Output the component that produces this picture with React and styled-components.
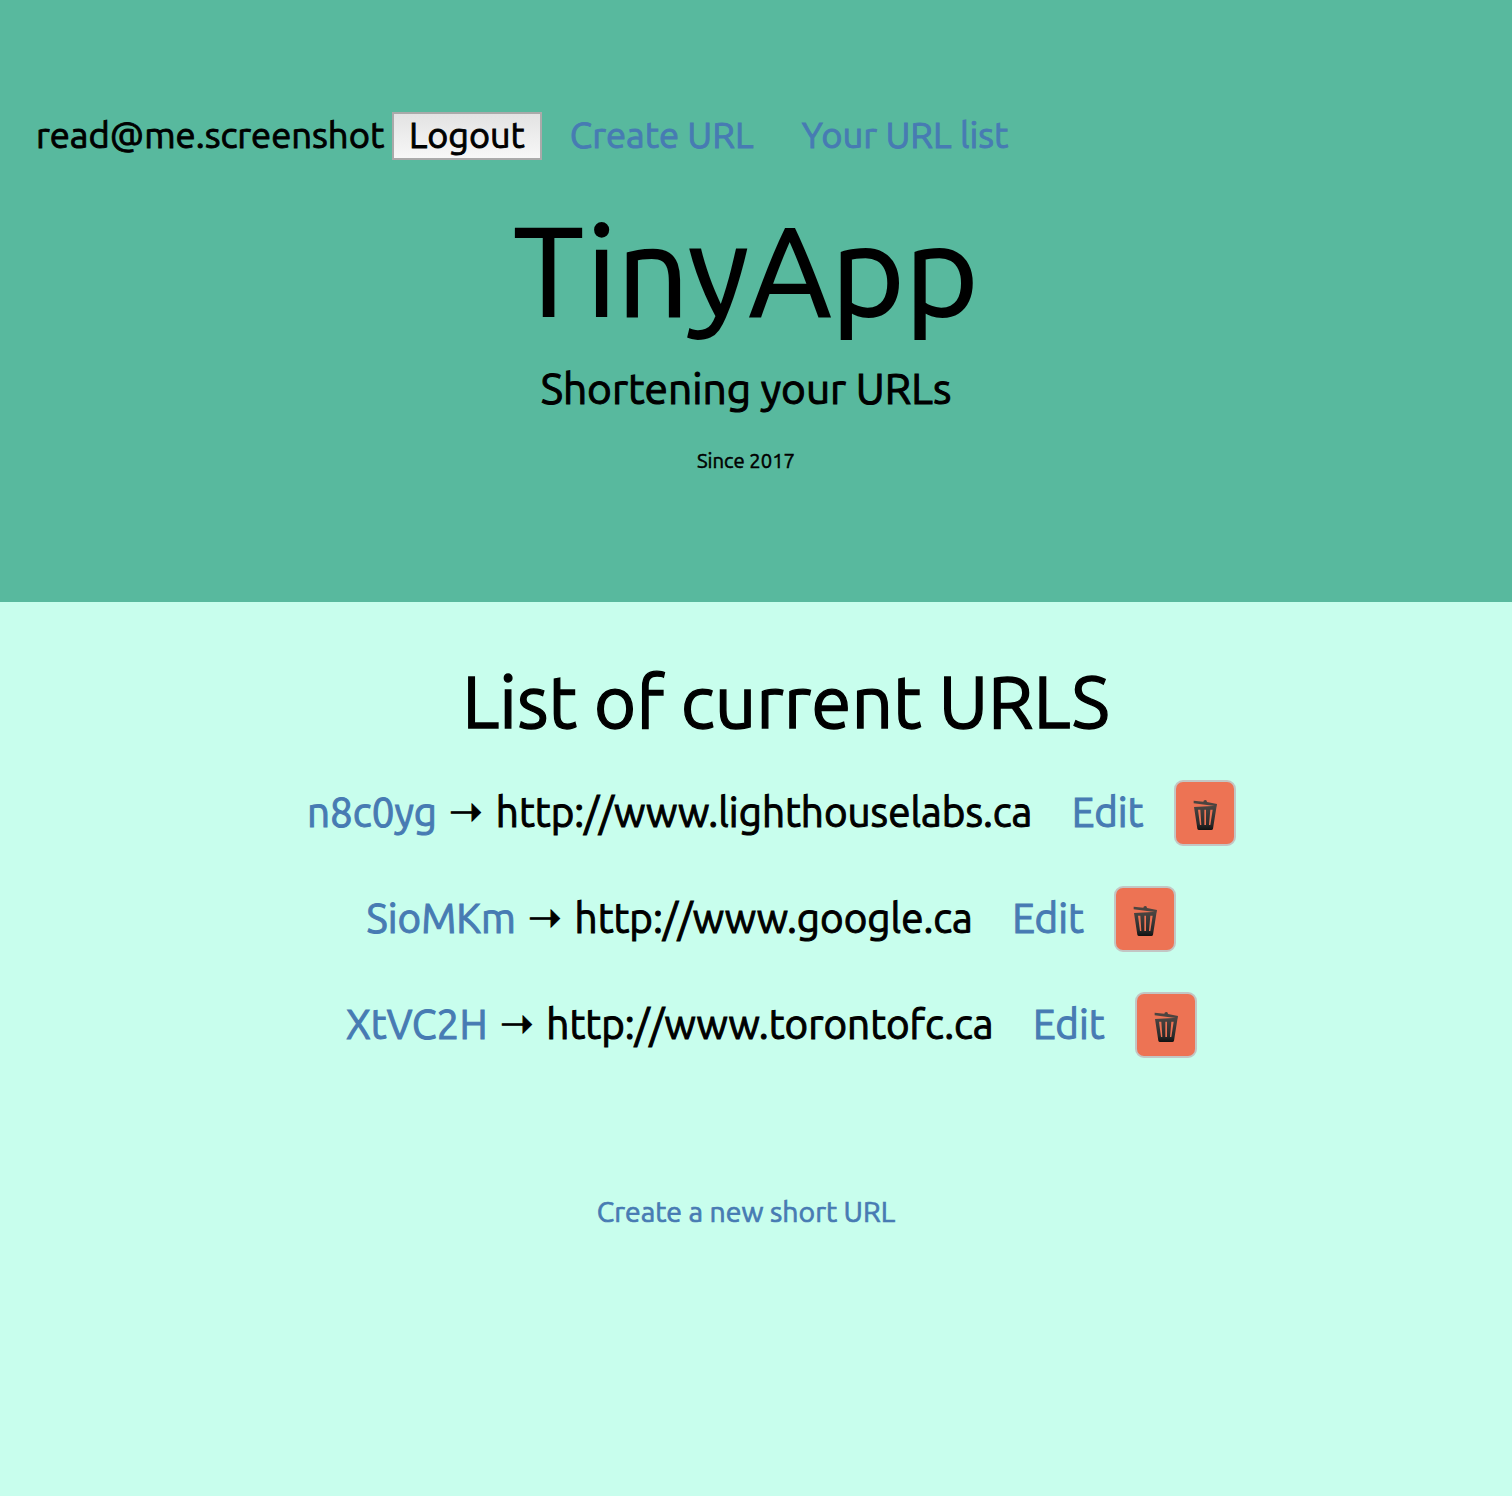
import React from "react";
import styled, { createGlobalStyle } from "styled-components";

const LINK = "#477bb3";

const GlobalStyle = createGlobalStyle`
  *, *::before, *::after {
    box-sizing: border-box;
    -webkit-text-stroke: 0.025em;
  }
  body {
    margin: 0;
    min-height: 1496px;
    background: #c8feed;
    color: #000;
    font-family: Ubuntu, "Noto Sans", sans-serif;
  }
`;

const Header = styled.header`
  height: 602px;
  padding: 112px 20px 0 0;
  background: #58b99e;
  text-align: center;
`;

const Nav = styled.nav`
  display: flex;
  align-items: flex-start;
  height: 48px;
  padding-left: 36px;
  font-size: 36.4px;
  line-height: 45px;
  white-space: nowrap;
`;

const LogoutButton = styled.button`
  width: 150px;
  height: 48px;
  margin: 0 28px 0 7.6px;
  padding: 0 0 3px;
  border: 2px solid #aaa;
  border-radius: 0;
  background: linear-gradient(#e3e3e3, #f7f7f7);
  color: inherit;
  font: 36px/41px Ubuntu, "Noto Sans", sans-serif;
`;

const Link = styled.a`
  color: ${LINK};
  text-decoration: none;
`;

const NavLink = styled(Link)`
  & + & { margin-left: 48.4px; }
`;

const Title = styled.h1`
  margin: 49px 0 0;
  font-size: 126.2px;
  font-weight: 400;
  line-height: 120px;
  -webkit-text-stroke: 0.014em;
`;

const Tagline = styled.p`
  margin: 34px 0 0;
  font-size: 42.4px;
  line-height: 50px;
`;

const Since = styled.p`
  margin: 35.5px 0 0;
  font-size: 20.3px;
  line-height: 24px;
`;

const Main = styled.main`
  padding: 54px 20px 0 0;
  text-align: center;
`;

const UrlSection = styled.section`
  padding-left: 80px;
`;

const Heading = styled.h2`
  margin: 0;
  font-size: 72.8px;
  font-weight: 400;
  line-height: 90px;
  -webkit-text-stroke: 0.018em;
`;

const UrlList = styled.ul`
  display: grid;
  gap: 40px;
  margin: 34px 0 0;
  padding: 0 29.3px 0 0;
  list-style: none;
`;

const UrlRow = styled.li`
  display: flex;
  justify-content: center;
  align-items: flex-start;
  height: 66px;
  font-size: 40.4px;
  line-height: 64px;
  white-space: nowrap;
`;

const Arrow = styled.span`
  width: 58.8px;
  line-height: 61px;
  -webkit-text-stroke: 1px;
`;

const EditLink = styled(Link)`
  margin: 0 30.2px 0 39.6px;
`;

const DeleteButton = styled.button`
  display: grid;
  justify-content: center;
  align-content: start;
  width: 62px;
  height: 66px;
  padding: 18px 0 0;
  border: 2px solid #c3c6c4;
  border-radius: 9px;
  background: #ed7354;
`;

const Footer = styled.footer`
  margin-top: 136.5px;
  font-size: 28.4px;
  line-height: 34px;
`;

function TrashIcon() {
  return (
    <svg width="24" height="31" viewBox="0 0 72 93" aria-hidden="true">
      <defs>
        <linearGradient id="can" x1="0" y1="0" x2="0" y2="1">
          <stop offset="0" stopColor="#4b4642" />
          <stop offset="0.75" stopColor="#2b2b2b" />
          <stop offset="1" stopColor="#111" />
        </linearGradient>
      </defs>
      <path d="M2 2 L31 5 Q31 0 37 0 Q42 0 42 6 L72 12 L71 19 L2 10 Z" fill="#4b4440" />
      <path
        fillRule="evenodd"
        fill="url(#can)"
        d="M3 21 L71 17 L60 86 Q59 90 55 90 L18 90 Q14 90 13 86 Z M15 29 L21 75 L25 75 L22 29 Z M34 29 L34 75 L39 75 L39 29 Z M52 29 L48 75 L52 75 L59 29 Z"
      />
    </svg>
  );
}

const URLS = [
  { code: "n8c0yg", target: "http://www.lighthouselabs.ca" },
  { code: "SioMKm", target: "http://www.google.ca" },
  { code: "XtVC2H", target: "http://www.torontofc.ca" },
];

export default function App() {
  return (
    <>
      <GlobalStyle />
      <Header>
        <Nav>
          <span>read@me.screenshot</span>
          <LogoutButton>Logout</LogoutButton>
          <NavLink href="#new">Create URL</NavLink>
          <NavLink href="#urls">Your URL list</NavLink>
        </Nav>
        <Title>TinyApp</Title>
        <Tagline>Shortening your URLs</Tagline>
        <Since>Since 2017</Since>
      </Header>
      <Main>
        <UrlSection>
          <Heading>List of current URLS</Heading>
          <UrlList>
            {URLS.map(({ code, target }) => (
              <UrlRow key={code}>
                <Link href={`#${code}`}>{code}</Link>
                <Arrow>➝</Arrow>
                <span>{target}</span>
                <EditLink href={`#edit-${code}`}>Edit</EditLink>
                <DeleteButton aria-label="Delete">
                  <TrashIcon />
                </DeleteButton>
              </UrlRow>
            ))}
          </UrlList>
        </UrlSection>
        <Footer>
          <Link href="#new">Create a new short URL</Link>
        </Footer>
      </Main>
    </>
  );
}
